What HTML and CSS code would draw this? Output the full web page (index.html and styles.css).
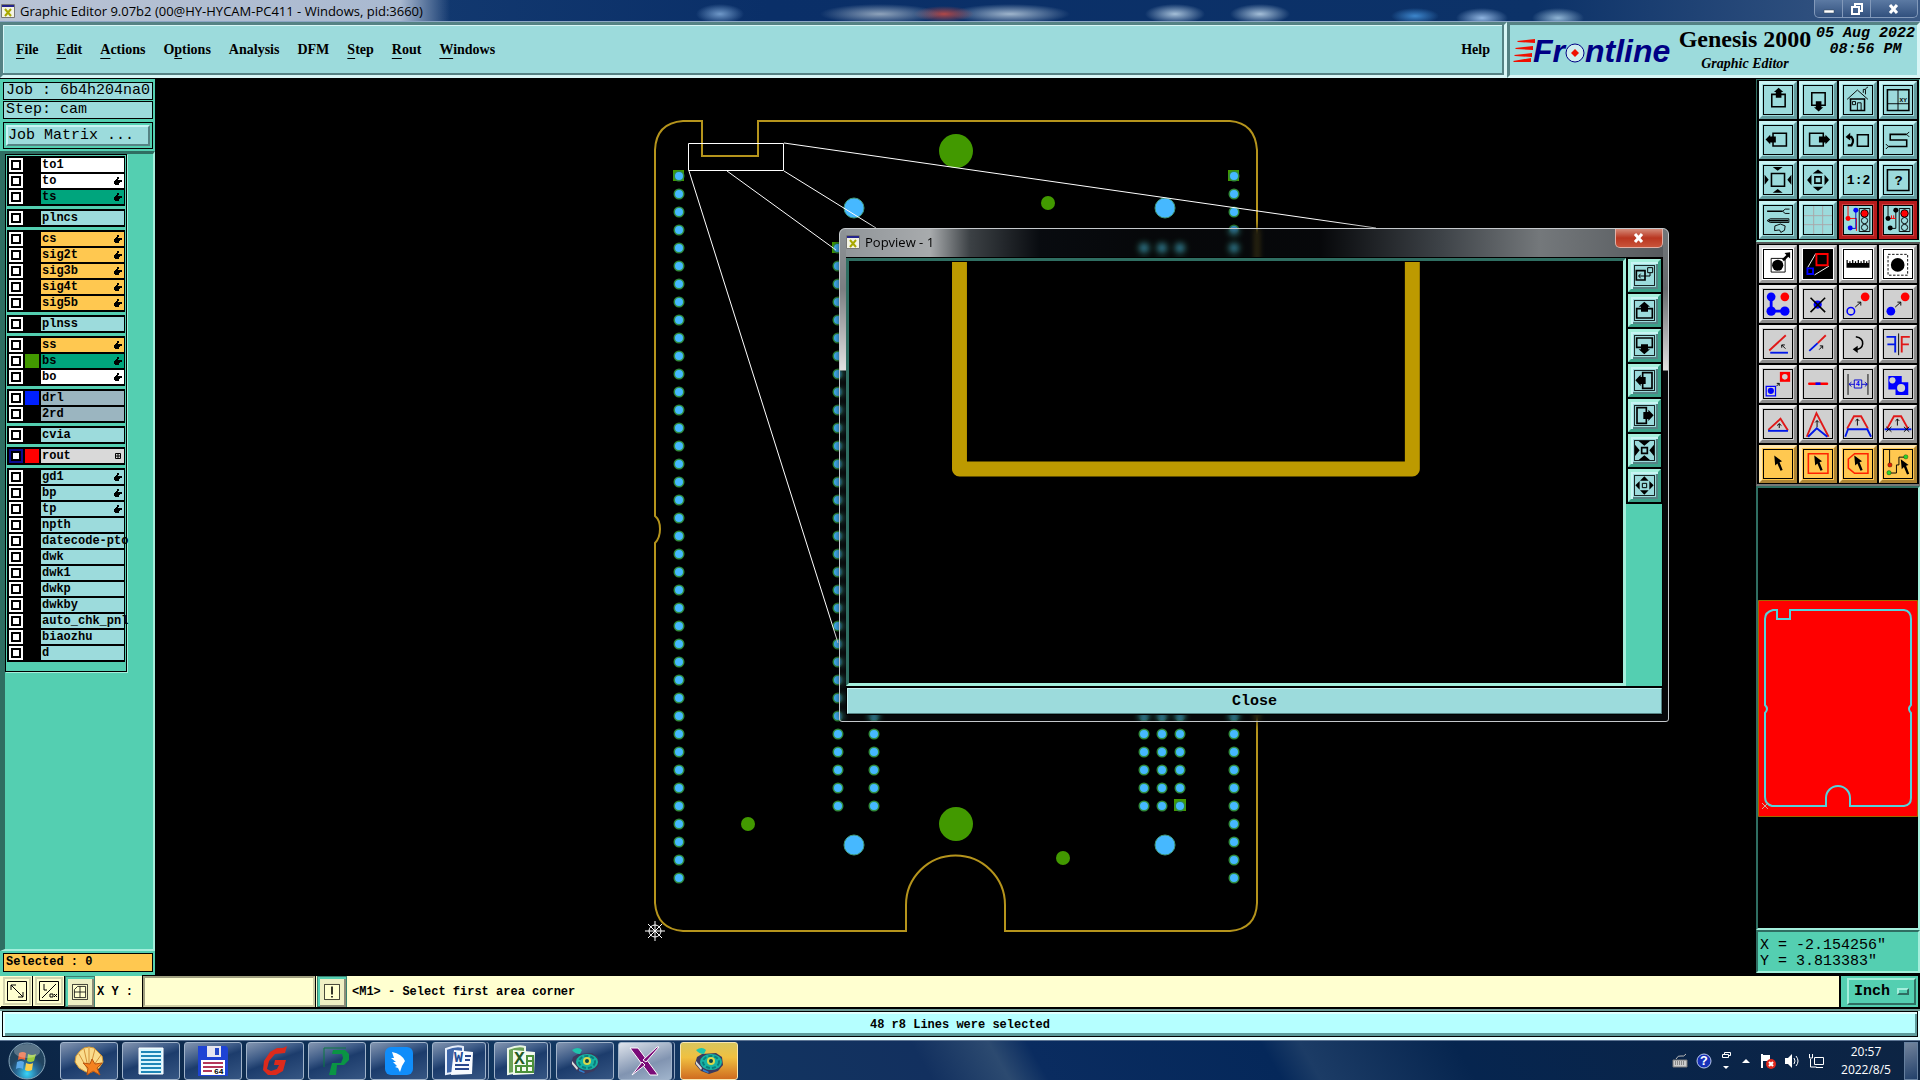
FILE: index.html
```html
<!DOCTYPE html>
<html lang="en">
<head>
<meta charset="utf-8">
<title>Graphic Editor</title>
<link rel="stylesheet" href="styles.css">
</head>
<body>
<svg class="defs" aria-hidden="true">
  <symbol id="hand" viewBox="0 0 8 8"><path d="M3 0h2v2h-1v1h4v2h-2v1h-1v2h-4v-1h-1v-3h1v-1h1v-1h1z"/></symbol>
  <symbol id="xlogo" viewBox="0 0 14 14"><path fill="#f4f4e4" stroke="#777" d="M.5 .5h13v13h-13z"/><path fill="#24248c" d="M1 1h12v2h-12z"/><path stroke="#a8a800" stroke-width="2" d="M4 5l6 7M10 5l-6 7"/></symbol>
  <symbol id="cursor" viewBox="0 0 90 90"><path d="M33 18L58 36L50 39L60 64L53 67L43 43L36 50Z"/></symbol>
  <symbol id="reel" viewBox="0 0 32 32"><path fill="#3c3a5e" d="M4 12l5-3 14-1 6 4 1 8-5 6-9 3-8-3-6-7z"/><ellipse cx="18" cy="17" rx="11" ry="8" fill="#17b3a3"/><ellipse cx="18" cy="17" rx="8" ry="6" fill="none" stroke="#0a7d7c" stroke-width="2" stroke-dasharray="4 2"/><circle cx="18" cy="16" r="4" fill="#d8d84a"/><circle cx="18" cy="16" r="2" fill="#07464c"/><path fill="#1fc5ac" d="M3 5q6-4 10 0l-2 4q-5 0-8-4z"/><path fill="#ddd" d="M3 16l6 7-1 2-5-6z"/><path fill="#2f7fd0" d="M10 24l6 3-1 1-5-2z"/></symbol>
</svg>

<header class="titlebar">
  <svg class="app-icon"><use href="#xlogo"/></svg>
  <span class="caption">Graphic Editor 9.07b2 (00@HY-HYCAM-PC411 - Windows, pid:3660)</span>
  <div class="winctl">
    <button aria-label="Minimize"><svg width="12" height="12"><path fill="#fff" stroke="#345" stroke-width=".5" d="M1 7h10v3h-10z"/></svg></button>
    <button aria-label="Restore"><svg width="12" height="12"><path fill="none" stroke="#fff" stroke-width="2" d="M4 3V1h7v7H9M1 4h7v7h-7z"/></svg></button>
    <button class="wide" aria-label="Close"><svg width="12" height="12"><path stroke="#fff" stroke-width="3" d="M2 2l7 8M9 2l-7 8"/></svg></button>
  </div>
</header>

<div class="head">
  <nav class="menu">
    <button><u>F</u>ile</button><button><u>E</u>dit</button><button><u>A</u>ctions</button><button>O<u>p</u>tions</button><button>Analysis</button><button>DFM</button><button><u>S</u>tep</button><button><u>R</u>out</button><button><u>W</u>indows</button><button class="help">Help</button>
  </nav>
  <div class="brand">
    <svg class="logo" width="162" height="44" viewBox="0 0 162 44">
      <path fill="#f00f00" d="M5 12L23 10v4L6 13zM3 19L21 17v4L4 20zM2 26L20 24v4L3 27zM1 32L19 29v4L2 33z"/>
      <text class="logotype" x="21" y="33">Fr</text><text class="logotype" x="73" y="33">ntline</text>
      <circle cx="63" cy="24" r="9" fill="#cfeeee" stroke="#000084" stroke-width="1"/><path fill="#f00f00" d="M63 20l4 4-4 4-4-4z"/>
    </svg>
    <div class="product"><strong>Genesis 2000</strong><em>Graphic Editor</em></div>
    <div class="stamp">05 Aug 2022<br>08:56 PM</div>
  </div>
</div>

<main class="work">
  <aside class="left">
    <div class="job">Job : 6b4h204na0</div>
    <div class="job">Step: cam</div>
    <div class="matrix"><button>Job Matrix ...</button></div>
    <div class="tray">
      <div class="layers">
        <div class="group">
          <label class="row white"><input type="checkbox"><i></i><span>to1</span></label>
          <label class="row white"><input type="checkbox"><i></i><span>to</span><svg><use href="#hand"/></svg></label>
          <label class="row green"><input type="checkbox"><i></i><span>ts</span><svg><use href="#hand"/></svg></label>
        </div>
        <div class="group"><label class="row"><input type="checkbox"><i></i><span>plncs</span></label></div>
        <div class="group">
          <label class="row amber"><input type="checkbox"><i></i><span>cs</span><svg><use href="#hand"/></svg></label>
          <label class="row amber"><input type="checkbox"><i></i><span>sig2t</span><svg><use href="#hand"/></svg></label>
          <label class="row amber"><input type="checkbox"><i></i><span>sig3b</span><svg><use href="#hand"/></svg></label>
          <label class="row amber"><input type="checkbox"><i></i><span>sig4t</span><svg><use href="#hand"/></svg></label>
          <label class="row amber"><input type="checkbox"><i></i><span>sig5b</span><svg><use href="#hand"/></svg></label>
        </div>
        <div class="group"><label class="row"><input type="checkbox"><i></i><span>plnss</span></label></div>
        <div class="group">
          <label class="row amber"><input type="checkbox"><i></i><span>ss</span><svg><use href="#hand"/></svg></label>
          <label class="row green"><input type="checkbox"><i class="sw-green"></i><span>bs</span><svg><use href="#hand"/></svg></label>
          <label class="row white"><input type="checkbox"><i></i><span>bo</span><svg><use href="#hand"/></svg></label>
        </div>
        <div class="group">
          <label class="row slate"><input type="checkbox"><i class="sw-blue"></i><span>drl</span></label>
          <label class="row slate"><input type="checkbox"><i></i><span>2rd</span></label>
        </div>
        <div class="group"><label class="row"><input type="checkbox"><i></i><span>cvia</span></label></div>
        <div class="group"><label class="row grey"><input type="checkbox" checked><i class="sw-red"></i><span>rout</span><svg viewBox="0 0 7 8"><path fill="none" stroke="#000" d="M1 1.500h5v5h-5zM3.500 1v6M1 4h5"/></svg></label></div>
        <div class="group">
          <label class="row"><input type="checkbox"><i></i><span>gd1</span><svg><use href="#hand"/></svg></label>
          <label class="row"><input type="checkbox"><i></i><span>bp</span><svg><use href="#hand"/></svg></label>
          <label class="row"><input type="checkbox"><i></i><span>tp</span><svg><use href="#hand"/></svg></label>
          <label class="row"><input type="checkbox"><i></i><span>npth</span></label>
          <label class="row"><input type="checkbox"><i></i><span>datecode-pto</span></label>
          <label class="row"><input type="checkbox"><i></i><span>dwk</span></label>
          <label class="row"><input type="checkbox"><i></i><span>dwk1</span></label>
          <label class="row"><input type="checkbox"><i></i><span>dwkp</span></label>
          <label class="row"><input type="checkbox"><i></i><span>dwkby</span></label>
          <label class="row"><input type="checkbox"><i></i><span>auto_chk_pnl</span></label>
          <label class="row"><input type="checkbox"><i></i><span>biaozhu</span></label>
          <label class="row"><input type="checkbox"><i></i><span>d</span></label>
        </div>
      </div>
    </div>
    <div class="selected">Selected : 0</div>
  </aside>

  <section class="canvas">
    <svg class="board" viewBox="155 79 1601 897">
      <g fill="none" stroke="#b5941c" stroke-width="2">
        <path d="M702 121H683Q656 123 655 150V516Q660 520 660 529Q660 538 655 543V903Q657 929 683 931H906V905A49 49 0 0 1 1005 905V931H1230Q1256 929 1257 903V150Q1255 123 1230 121H758V156H702Z"/>
      </g>
      <g fill="#429900">
        <circle cx="956" cy="151" r="17"/><circle cx="1048" cy="203" r="7"/><circle cx="956" cy="824" r="17"/><circle cx="748" cy="824" r="7"/><circle cx="1063" cy="858" r="7"/>
        <path d="M673 170h11v11h-11zM1228 170h11v11h-11zM832 242h11v11h-11zM1174 799h12v12h-12z"/>
      </g>
      <g fill="#46b8ff" stroke="#429978"><circle cx="854" cy="208" r="10"/><circle cx="1165" cy="208" r="10"/><circle cx="854" cy="845" r="10"/><circle cx="1165" cy="845" r="10"/></g>
      <g class="pads">
        <path class="rim" d="M679 176V879M1234 176V879M838 248V807M874 248V807M1144 248V807M1162 248V807M1180 248V807"/>
        <path class="core" d="M679 176V879M1234 176V879M838 248V807M874 248V807M1144 248V807M1162 248V807M1180 248V807"/>
      </g>
      <g class="hair"><path d="M688.500 143.500H783.500V170.500H688.500ZM784 143L1376 228M784 171L876 228M727 171L836 250M689 171L838 643"/></g>
      <g class="hair"><circle cx="655" cy="931" r="6"/><path d="M645 931h20M655 921v20M648 924l14 14M662 924l-14 14"/></g>
    </svg>

    <div class="popview">
      <div class="pop-title"><svg class="app-icon"><use href="#xlogo"/></svg><span class="caption">Popview - 1</span>
        <button class="pop-x" aria-label="Close window"><svg width="12" height="12"><path stroke="#fff" stroke-width="3" d="M2 2l7 8M9 2l-7 8"/></svg></button></div>
      <div class="pop-body">
        <div class="pop-view"><svg viewBox="0 0 775 424" preserveAspectRatio="xMinYMin meet"><path fill="none" stroke="#bd9a00" stroke-width="15" stroke-linejoin="round" d="M111 1V209H566V1"/></svg></div>
        <div class="pop-tools">
          <button aria-label="Pick area"><svg viewBox="0 0 63 63"><path class="k3" d="M1 1h61v61H1z"/><path class="k5" d="M7 17h26v28H7z"/><path class="k3" d="M41 8h15v15H41zM48 24v9H14M20 26l-6 7 6 7"/></svg></button>
          <button aria-label="Pan up"><svg viewBox="0 0 63 63"><path class="k3" d="M1 1h61v61H1z"/><path class="k5" d="M22 26H8V54H55V26H41"/><path d="M31 5L48 20H42V35H21V20H14Z"/></svg></button>
          <button aria-label="Pan down"><svg viewBox="0 0 63 63"><path class="k3" d="M1 1h61v61H1z"/><path class="k5" d="M22 37H8V9H55V37H41"/><path d="M31 58L48 43H42V28H21V43H14Z"/></svg></button>
          <button aria-label="Pan left"><svg viewBox="0 0 63 63"><path class="k3" d="M1 1h61v61H1z"/><path class="k5" d="M26 22V8H54V55H26V41"/><path d="M4 31L20 14V21H35V42H20V48Z"/></svg></button>
          <button aria-label="Pan right"><svg viewBox="0 0 63 63"><path class="k3" d="M1 1h61v61H1z"/><path class="k5" d="M37 22V8H9V55H37V41"/><path d="M59 31L43 14V21H28V42H43V48Z"/></svg></button>
          <button aria-label="Zoom out"><svg viewBox="0 0 63 63"><path class="k3" d="M1 1h61v61H1z"/><path class="k5" d="M23 23h17v17H23z"/><path d="M14 3H48L31 17ZM14 60H48L31 46ZM3 14V48L17 31ZM60 14V48L46 31Z"/></svg></button>
          <button aria-label="Zoom in"><svg viewBox="0 0 63 63"><path class="k3" d="M1 1h61v61H1z"/><path class="k3" d="M25 25h13v13H25z"/><path d="M18 17H44L31 4ZM18 46H44L31 59ZM17 18V44L4 31ZM46 18V44L59 31Z"/></svg></button>
          <div class="fill"></div>
        </div>
      </div>
      <button class="pop-close">Close</button>
    </div>
  </section>

  <aside class="right">
    <div class="tools cyan">
      <button aria-label="Pan up"><svg viewBox="0 0 90 90"><path class="k5" d="M25 27h43v40H25z"/><path d="M47 6L62 19H56V38H38V19H32Z"/></svg></button>
      <button aria-label="Pan down"><svg viewBox="0 0 90 90"><path class="k5" d="M25 22h43v40H25z"/><path d="M47 82L62 68H56V49H38V68H32Z"/></svg></button>
      <button aria-label="Home"><svg viewBox="0 0 90 90"><path class="k3" d="M10 43L43 13L77 43M27 50h10v10H27zM43 80V54H55V80M62 22V11h7v16M69 9l8-6"/><path class="k5" d="M21 42V79H66V42H18"/></svg></button>
      <button aria-label="Coordinates"><svg viewBox="0 0 90 90"><path class="k5" d="M11 12h69v67H11z"/><path class="k3" d="M45 12V79M11 57H80"/><text x="50" y="52" font-size="20">XY</text></svg></button>
      <button aria-label="Pan left"><svg viewBox="0 0 90 90"><path class="k5" d="M29 23h43v41H29z"/><path d="M5 43L20 28V34H38V53H20V59Z"/></svg></button>
      <button aria-label="Pan right"><svg viewBox="0 0 90 90"><path class="k5" d="M18 23h44v41H18z"/><path d="M84 43L69 28V34H48V53H69V59Z"/></svg></button>
      <button aria-label="Previous view"><svg viewBox="0 0 90 90"><path class="k5" d="M43 28h35v37H43z"/><path fill="none" stroke="#000" stroke-width="7" d="M14 35H24Q34 48 24 62H12"/><path d="M5 35L20 22V47Z"/></svg></button>
      <button aria-label="Serpentine"><svg viewBox="0 0 90 90"><path class="k5" d="M73 27H20V45H73V66H14"/><path class="k3" d="M73 27l8-8M73 27l8 8M14 66l-8-8M14 66l-8 8"/></svg></button>
      <button aria-label="Zoom out"><svg viewBox="0 0 90 90"><path class="k5" d="M24 24h42v41H24z"/><path d="M28 3H60L44 15ZM28 86H60L44 74ZM2 28V60L15 44ZM88 28V60L75 44Z"/></svg></button>
      <button aria-label="Zoom in"><svg viewBox="0 0 90 90"><path class="k5" d="M35 35h20v20H35z"/><path d="M28 24H62L45 11ZM28 67H62L45 80ZM24 28V62L10 45ZM66 28V62L80 45Z"/></svg></button>
      <button aria-label="Scale 1:2"><svg viewBox="0 0 90 90"><text x="9" y="59" font-size="42">1:2</text></svg></button>
      <button aria-label="Help"><svg viewBox="0 0 90 90"><path class="k5" d="M11 12h69v67H11z"/><text x="34" y="62" font-size="44">?</text></svg></button>
      <button aria-label="Setup"><svg viewBox="0 0 90 90"><path class="k5" d="M10 17H60M15 47H78"/><path class="k3" d="M60 17l8-7h14M60 17l8 7h14M10 47l10-6H80V53H20Z"/><path class="k3" d="M35 64l18-6 15 6-2 14-12 7-4-8-16 2z"/></svg></button>
      <button aria-label="Grid"><svg viewBox="0 0 90 90"><path fill="none" stroke="#a9a7a9" stroke-width="3" d="M31 0V90M60 0V90M0 31H90M0 60H90"/></svg></button>
      <button class="red" aria-label="Run check"><svg viewBox="0 0 90 90"><path class="r3" d="M13 0V40H40V80"/><path class="b3" d="M38 15V72H20"/><circle cx="38" cy="14" r="8" fill="#00f"/><circle cx="20" cy="71" r="8" fill="#00f"/><circle cx="13" cy="40" r="8" fill="#f00"/><path class="k3" d="M49 8h34v74H49z"/><circle cx="66" cy="24" r="12" fill="#f00" stroke="#000" stroke-width="3"/><circle class="k3" cx="66" cy="47" r="10"/><circle class="k3" cx="66" cy="69" r="10"/></svg></button>
      <button class="red" aria-label="Net check"><svg viewBox="0 0 90 90"><path class="k3" d="M13 0V40M38 15V72H20"/><path class="r3" d="M19 40H38M24 30V40M31 30V40"/><circle cx="38" cy="14" r="8"/><circle cx="20" cy="71" r="8"/><circle cx="13" cy="40" r="8"/><path class="k3" d="M49 8h34v74H49z"/><circle cx="66" cy="24" r="12" fill="#f00" stroke="#000" stroke-width="3"/><circle class="k3" cx="66" cy="47" r="10"/><circle class="k3" cx="66" cy="69" r="10"/></svg></button>
    </div>
    <div class="tools gray">
      <button class="white" aria-label="Pop view"><svg viewBox="0 0 90 90"><path class="k3" d="M23 27h45v44H23z"/><circle cx="44" cy="49" r="18"/><path d="M84 7V27L78 22L64 36L58 30L72 16L66 10Z"/></svg></button>
      <button class="white" aria-label="Area view"><svg viewBox="0 0 90 90"><path d="M0 0h90v90H0z"/><path fill="none" stroke="#fff" stroke-width="3" d="M38 11L12 56M80 52L34 80"/><path fill="none" stroke="#f00" stroke-width="6" d="M40 13h36v36H40z"/><path fill="none" stroke="#00f" stroke-width="6" d="M11 59h18v18H11z"/></svg></button>
      <button class="white" aria-label="Measure"><svg viewBox="0 0 90 90"><path d="M8 32h4v10h5V36h4v6h5V32h4v10h5V36h4v6h5V32h4v10h5V36h4v6h5V32h4v10h5V36h4v6h4V32h3V57H8Z"/></svg></button>
      <button class="white" aria-label="Select pad"><svg viewBox="0 0 90 90"><circle cx="44" cy="48" r="22"/><path class="k3" stroke-dasharray="8 5" d="M13 14h63v67H13z"/></svg></button>
      <button aria-label="Add"><svg viewBox="0 0 90 90"><path fill="none" stroke="#00f" stroke-width="9" d="M23 22V68H67"/><g fill="#00f"><circle cx="23" cy="22" r="14"/><circle cx="23" cy="68" r="15"/><circle cx="67" cy="68" r="15"/></g><circle cx="67" cy="22" r="14" fill="#f00"/></svg></button>
      <button aria-label="Delete"><svg viewBox="0 0 90 90"><circle cx="44" cy="47" r="13" fill="#00f"/><path class="k5" d="M21 25L68 71M68 25L21 71"/></svg></button>
      <button aria-label="Copy"><svg viewBox="0 0 90 90"><circle cx="22" cy="68" r="12" fill="none" stroke="#00f" stroke-width="5"/><circle cx="68" cy="22" r="14" fill="#f00"/><path class="k3" d="M36 55L54 39M43 39h11v11"/></svg></button>
      <button aria-label="Move"><svg viewBox="0 0 90 90"><circle cx="22" cy="68" r="14" fill="#00f"/><circle cx="68" cy="22" r="14" fill="#f00"/><path class="k3" d="M36 55L54 39M43 39h11v11"/></svg></button>
      <button aria-label="Rotate"><svg viewBox="0 0 90 90"><path class="r6" d="M17 66L70 17"/><path class="b6" d="M20 73H77"/><path class="k3" d="M69 60L57 48M57 57V48H67"/></svg></button>
      <button aria-label="Extend"><svg viewBox="0 0 90 90"><path class="b6" d="M17 67L44 42"/><path class="r6" d="M44 42L70 17"/><path class="k3" d="M49 63L60 51M51 51H60V60"/></svg></button>
      <button aria-label="Undo"><svg viewBox="0 0 90 90"><path class="k5" d="M38 22Q62 26 60 45Q58 62 36 63"/><path d="M28 62L44 51V74Z"/></svg></button>
      <button aria-label="Mirror"><svg viewBox="0 0 90 90"><path class="k3" d="M47 11V81"/><path class="b6" d="M8 22H36V72M11 46H36"/><path class="r6" d="M83 22H57V72M80 46H57"/></svg></button>
      <button aria-label="Change symbol"><svg viewBox="0 0 90 90"><path fill="none" stroke="#00f" stroke-width="4" d="M7 53h30v30H7z"/><circle cx="22" cy="67" r="10" fill="#00f"/><path fill="#f00" d="M51 6h33v32H51z"/><circle cx="67" cy="22" r="9" fill="#d0d0d0"/><path class="k3" d="M40 52L49 43M41 43H49V51"/></svg></button>
      <button aria-label="Break"><svg viewBox="0 0 90 90"><path stroke="#f00" stroke-width="8" stroke-linecap="round" d="M17 44H74"/><path stroke="#00f" stroke-width="8" d="M37 44H53"/></svg></button>
      <button aria-label="Resize"><svg viewBox="0 0 90 90"><path class="k3" d="M13 13V80M77 13V80"/><path class="b3" d="M33 32H57V58H33ZM33 46H17M24 39l-8 7 8 7M57 46H74M67 39l8 7-8 7"/><text x="38" y="53" font-size="22" fill="#00f">4</text></svg></button>
      <button aria-label="Polarity"><svg viewBox="0 0 90 90"><path fill="#00f" d="M14 19H57V39H78V80H37V63H14Z"/><circle cx="27" cy="33" r="10" fill="#d0d0d0"/><circle cx="55" cy="58" r="13" fill="#d0d0d0"/></svg></button>
      <button aria-label="Move triangle"><svg viewBox="0 0 90 90"><path class="r6" d="M14 64L53 28L77 66"/><path class="b6" d="M13 67H77"/><path class="k3" d="M49 58V44M42 50l7-6 7 6"/></svg></button>
      <button aria-label="Stretch peak"><svg viewBox="0 0 90 90"><path class="r6" d="M9 86L40 10L79 86"/><path class="b6" d="M13 86L41 59L75 86"/><path class="k3" d="M42 55V34M36 40l6-6 6 6"/></svg></button>
      <button aria-label="Stretch trapezoid"><svg viewBox="0 0 90 90"><path class="r6" d="M10 60L32 20H55L77 60"/><path class="b6" d="M4 86L13 62H75L87 86"/><path class="k3" d="M43 50V29M37 35l6-6 6 6"/></svg></button>
      <button aria-label="Stretch clipped"><svg viewBox="0 0 90 90"><path class="r6" d="M10 60L32 20H55L77 60"/><path class="b6" d="M2 62H88"/><path class="k3" d="M43 50V29M37 35l6-6 6 6M7 54l17 16M24 54L7 70M64 54l17 16M81 54L64 70"/></svg></button>
      <button class="amber" aria-label="Select"><svg viewBox="0 0 90 90"><use href="#cursor"/></svg></button>
      <button class="amber" aria-label="Select in frame"><svg viewBox="0 0 90 90"><path class="r5" d="M14 12h63v63H14z"/><use href="#cursor"/></svg></button>
      <button class="amber" aria-label="Select in polygon"><svg viewBox="0 0 90 90"><path class="r5" d="M34 12H77V75H34L14 58V29Z"/><use href="#cursor"/></svg></button>
      <button class="amber" aria-label="Select net"><svg viewBox="0 0 90 90"><path class="k3" d="M18 0V45M18 74H40V48H48V23H70"/><circle cx="70" cy="22" r="7" fill="#2bd52b" stroke="#000"/><circle cx="16" cy="73" r="7" fill="#2bd52b" stroke="#000"/><circle cx="19" cy="48" r="7" fill="#e02000" stroke="#000"/><use href="#cursor" x="21" y="12"/></svg></button>
    </div>
    <div class="overview">
      <svg viewBox="0 0 160 217"><path fill="#f00" stroke="#a06a00" d="M.5 .5h159v216H.5z"/><path fill="none" stroke="#52d4dc" stroke-width="2" d="M19 10H15Q7 12 7 19V105Q9 107 9 109Q9 111 7 113V197Q7 204 14 206H68V198A12 12 0 0 1 92 198V206H146Q153 205 153 198V113Q151 111 151 109Q151 107 153 105V19Q153 11 146 10H32V19H19Z"/><path stroke="#c8b0a0" d="M4 203l6 6M10 203l-6 6"/></svg>
    </div>
    <div class="coords">X = -2.154256"<br>Y = 3.813383"</div>
  </aside>
</main>

<form class="prompt">
  <button type="button" class="pbtn" aria-label="Snap"><svg viewBox="0 0 20 20"><path class="k1" d="M.5 .5h19v19H.5zM4 4l12 12M4 9V4h5M16 11v5h-5"/></svg></button>
  <button type="button" class="pbtn" aria-label="Angle"><svg viewBox="0 0 20 20"><path class="k1" d="M.5 .5h19v19H.5zM3 17L17 3M5 3v6h3M11 13h3v3h-3zM15 13l3 3M18 13l-3 3"/></svg></button>
  <button type="button" class="pbtn raised" aria-label="Grid snap"><svg viewBox="0 0 20 20"><path class="k1" d="M.5 .5h19v19H.5zM7 3h10v14H3V7zM10 3v14M3 10h14"/></svg></button>
  <label for="xy">X Y :</label>
  <input id="xy" type="text">
  <button type="button" class="pbtn raised" aria-label="Execute"><svg viewBox="0 0 20 20"><path class="k1" d="M.5 .5h19v19H.5z"/><path d="M9 3h2v10H9zM9 15h2v2H9z"/></svg></button>
  <output>&lt;M1&gt; - Select first area corner</output>
  <div class="unit"><button type="button">Inch<i></i></button></div>
</form>

<div class="status"><p>48 r8 Lines were selected</p></div>

<footer class="taskbar">
  <button class="orb" aria-label="Start"><svg viewBox="0 0 38 38"><defs><radialGradient id="o" cy=".85"><stop offset="0" stop-color="#38d5fa"/><stop offset=".6" stop-color="#286a96"/><stop offset="1" stop-color="#22445f"/></radialGradient></defs><circle cx="19" cy="19" r="18" fill="url(#o)" stroke="#88a6ba"/><path fill="#e9653a" d="M11 11q4-2 7 0l-1 7q-4-2-7 0z"/><path fill="#9acb3d" d="M20 12q4 2 8 0l-2 7q-4 2-7 0z"/><path fill="#5aa9e8" d="M9 20q4-2 7 0l-1 7q-4-2-7 0z"/><path fill="#fbd04a" d="M18 21q4 2 7 0l-1 7q-4 2-7 0z"/><ellipse cx="19" cy="9" rx="13" ry="7" fill="#fff" opacity=".25"/></svg></button>
  <button class="task" aria-label="Shell"><svg viewBox="0 0 32 32"><path fill="#fadc8c" stroke="#d79a35" d="M16 2l5 1 4 4 4 4 1 6-4 6-7 4h-6l-7-4-4-6 1-6 4-5 4-3z"/><path stroke="#d2923a" d="M16 27L6 9M16 27L11 4M16 27V3M16 27L22 4M16 27L28 10"/><path fill="#f58220" stroke="#b95510" d="M19 14l3 5 7-1-5 5 3 7-7-4-6 4 1-7-5-5 7 1z"/></svg></button>
  <button class="task" aria-label="Notes"><svg viewBox="0 0 32 32"><path fill="#d9f6ff" stroke="#fff" d="M4 3h24v26H4z"/><path stroke="#1f86b7" stroke-width="2" d="M6 7h20M6 11h20M6 15h20M6 19h20M6 23h20M6 27h20"/></svg></button>
  <button class="task" aria-label="Disk"><svg viewBox="0 0 32 32"><path fill="#1e43d4" d="M1 1h28l2 2v28H1z"/><path fill="#e5e5ef" d="M10 1h14v11H10z"/><path fill="#2348c8" d="M18 3h4v7h-4z"/><path fill="#fff" d="M4 15h24v15H4z"/><path stroke="#b4375a" stroke-width="2" d="M6 18h20M6 22h20M6 26h9"/><text x="17" y="29" font-size="8">64</text></svg></button>
  <button class="task" aria-label="Genesis"><svg viewBox="0 0 32 32"><path fill="#dc2a1c" d="M28 1l-2 7-10 1-6 7-2 8 4 2 6-2 2-4h-5l1-5h11l-3 11-7 4H9l-5-5 1-9 6-9 7-4 6 0z"/></svg></button>
  <button class="task" aria-label="Planner"><svg viewBox="0 0 32 32"><path fill="#0a9444" d="M12 5h12l4 4v6l-5 5h-7l-1 10H8l3-12h9l2-5-1-4H11z"/><path fill="none" stroke="#0a7a40" d="M3 22V3h22"/></svg></button>
  <button class="task" aria-label="Messenger"><svg viewBox="0 0 32 32"><rect x="2" y="2" width="28" height="28" rx="6" fill="#108dfa"/><path fill="#fff" d="M9 7q10 2 13 9l-3 5-2 6-2-4-3-1 2-1-4-4 3 0-5-4 3 0z"/></svg></button>
  <button class="task stack" aria-label="Word"><svg viewBox="0 0 32 32"><path fill="#3e66a9" stroke="#e6eefa" stroke-width="2" d="M3 4q10-4 17-2v24L3 29z"/><path fill="#f7fafe" d="M11 5l19 2-1 22-21 1z"/><path stroke="#29478d" stroke-width="2" d="M22 11h6M22 15h5M12 20h14M12 24h14"/><text x="11" y="17" font-size="15" fill="#244c94">W</text></svg></button>
  <button class="task stack" aria-label="Excel"><svg viewBox="0 0 32 32"><path fill="#6aa257" stroke="#eaf6e6" stroke-width="2" d="M3 4q10-4 17-2v24L3 29z"/><path fill="#f3faee" d="M8 5l22 2-1 22-21 1z"/><path fill="none" stroke="#4c913a" stroke-width="2" d="M21 11h7v16H11v-6h17M16 20v7M22 11v16M21 16h7"/><text x="9" y="19" font-size="18" fill="#235b22">X</text></svg></button>
  <button class="task" aria-label="Reel"><svg><use href="#reel"/></svg></button>
  <button class="task stack lit" aria-label="X server"><svg viewBox="0 0 32 32"><path fill="#7a0b78" stroke="#fff" d="M1 3h8l20 27h-8z"/><path fill="#7a0b78" stroke="#fff" d="M28 2h2L17 17l-3-2zM13 17l3 3L3 30z"/></svg></button>
  <button class="task hot" aria-label="Graphic Editor"><svg><use href="#reel"/></svg></button>
  <div class="systray">
    <svg width="16" height="16"><path fill="#ccc" stroke="#777" d="M1 7h14v7H1z"/><path stroke="#444" stroke-dasharray="1 1" d="M3 9h10M3 11h10"/><path fill="none" stroke="#bbb" d="M4 6q2-4 5-3t5-2"/></svg>
    <svg width="16" height="16"><circle cx="8" cy="8" r="7" fill="#1731b8" stroke="#b9c8ea"/><text x="4" y="12" font-size="13" fill="#fff">?</text></svg>
    <svg width="12" height="20"><path fill="none" stroke="#fff" d="M4.500 3.500V1.500h6v3h-2M2.500 3.500h6v3h-6z"/><path fill="#fff" d="M3 15h6l-3 3z"/></svg>
    <svg width="12" height="12"><path fill="#fff" d="M2 8h8L6 4z"/></svg>
    <svg width="16" height="16"><path stroke="#fff" stroke-width="2" d="M2 1v14"/><path fill="#fff" d="M3 2h7v6H3z"/><circle cx="11" cy="11" r="5" fill="#e0281c"/><path stroke="#fff" stroke-width="2" d="M9 9l4 4M13 9l-4 4"/></svg>
    <svg width="16" height="16"><path fill="#fff" d="M1 5h3l4-4v14l-4-4H1z"/><path fill="none" stroke="#fff" d="M10 5q2 3 0 6M12 3q4 5 0 10"/></svg>
    <svg width="16" height="16"><path fill="none" stroke="#fff" stroke-width="1" d="M6.500 4.500h9v7h-9zM2.500 6v8h6M8 14.500h7M1.500 1v4h3V1"/></svg>
    <time>20:57<br>2022/8/5</time>
  </div>
  <button class="peek" aria-label="Show desktop"></button>
</footer>
</body>
</html>
```

FILE: styles.css
```css
:root {
  --teal: #54cfb1;
  --teal-hi: #a4efdc;
  --teal-lo: #2f6e62;
  --cyan: #9cdbdc;
  --cyan-hi: #c8f4f4;
  --cyan-lo: #558284;
  --mono: "Liberation Mono", "Courier New", monospace;
  --serif: "Liberation Serif", "Times New Roman", serif;
  --ui: "Open Sans", "Noto Sans", sans-serif;
}
* { box-sizing: border-box; }
body {
  margin: 0;
  min-height: 100vh;
  display: flex;
  flex-direction: column;
  background: #000;
  color: #000;
  font-family: var(--mono);
}
button { font: inherit; color: inherit; margin: 0; padding: 0; border: 0; background: none; border-radius: 0; }
svg { display: block; flex: none; }
.defs { width: 0; height: 0; position: absolute; }
svg text { font-family: var(--mono); font-weight: bold; }
.k1, .k3, .k5, .r3, .b3, .r5, .r6, .b6 { fill: none; stroke: #000; stroke-width: 1; }
.k3 { stroke-width: 3; }
.k5 { stroke-width: 5; }
.r3 { stroke: #f00; stroke-width: 3; }
.r5 { stroke: #f20; stroke-width: 5; }
.r6 { stroke: #e01818; stroke-width: 6; }
.b3 { stroke: #00c; stroke-width: 3; }
.b6 { stroke: #0018e8; stroke-width: 6; }

/* window title */
.titlebar {
  height: 22px;
  display: flex;
  align-items: center;
  gap: 5px;
  padding-left: 1px;
  border-bottom: 1px solid #8ba6c4;
  background:
    linear-gradient(90deg, #b9c3d4 0, #a9b9d0 400px, transparent 450px),
    radial-gradient(24px 10px at 720px 14px, #6f98c8, transparent),
    radial-gradient(60px 10px at 880px 14px, #8fa3bb, transparent),
    radial-gradient(30px 8px at 944px 14px, #b04848, transparent),
    radial-gradient(60px 10px at 1010px 14px, #9fb5cc, transparent),
    radial-gradient(30px 10px at 1175px 14px, #a5bfd8, transparent),
    radial-gradient(30px 10px at 1260px 14px, #a5bfd8, transparent),
    radial-gradient(24px 8px at 1415px 16px, #3d86cc, transparent),
    radial-gradient(26px 10px at 1482px 18px, #8fb4e0, transparent),
    radial-gradient(26px 10px at 1558px 18px, #8fb4d4, transparent),
    linear-gradient(90deg, #1c4478, #0a2f68 40%, #0c3268 80%, #3b5a86);
}
.app-icon { width: 14px; height: 14px; }
.caption { font: 13px/18px var(--ui); }
.winctl { margin-left: auto; margin-right: 2px; align-self: flex-start; display: flex; height: 18px; border: 1px solid #8299ba; border-top: 0; border-radius: 0 0 5px 5px; background: linear-gradient(#5c7aa3, #31507e); }
.winctl button { width: 28px; display: grid; place-items: center; border-right: 1px solid #8299ba; }
.winctl .wide { width: 46px; border: 0; }

/* menu and brand */
.head { display: flex; height: 56px; }
.menu, .brand { border: 3px solid; border-color: var(--cyan-lo) #d8f6f6 #d8f6f6 var(--cyan-lo); background: var(--cyan); display: flex; }
.menu { flex: 1; align-items: center; gap: 18px; padding: 0 14px 0 13px; font: bold 14px/20px var(--serif); box-shadow: inset -2px -2px var(--cyan-lo), inset 1px 1px #d8f6f6; }
.menu u { text-underline-offset: 4px; }
.help { margin-left: auto; }
.brand { width: 413px; padding: 0 2px; }
.logo { margin-top: 4px; }
.logotype { font: italic bold 32px "Liberation Sans", Arial, sans-serif; fill: #000084; }
.product { width: 142px; display: flex; flex-direction: column; align-items: center; font-family: var(--serif); }
.product strong { font-size: 24px; line-height: 28px; }
.product em { font-size: 14px; line-height: 22px; font-weight: bold; }
.stamp { flex: 1; font: italic bold 15px/16px var(--mono); text-align: center; white-space: nowrap; padding-top: 1px; }

.work { flex: 1; display: flex; border-top: 1px solid #000; }

/* layer list */
.left { width: 155px; background: var(--teal); display: flex; flex-direction: column; padding: 3px 2px 4px 3px; }
.job { height: 18px; margin-bottom: 1px; border: 1px solid #000; background: var(--cyan); padding-left: 2px; font-size: 15px; line-height: 16px; white-space: pre; overflow: hidden; }
.matrix { border: 1px solid #000; height: 27px; margin-top: 2px; padding: 2px; }
.matrix button { width: 100%; height: 21px; border: 2px solid; border-color: var(--cyan-hi) var(--cyan-lo) var(--cyan-lo) var(--cyan-hi); background: var(--cyan); font-size: 15px; line-height: 17px; text-align: left; }
.tray { flex: 1; margin: 2px -2px 2px -3px; border: solid; border-width: 3px 2px 2px 5px; border-color: var(--teal-lo) var(--teal-hi) var(--teal-hi) var(--teal-lo); }
.layers { width: 122px; border: 1px solid #000; box-shadow: 1px 1px var(--teal-hi); padding: 1px 1px 9px; display: grid; gap: 3px; }
.group { background: #000; width: 118px; padding: 1px 1px 1px 2px; font-size: 12px; font-weight: bold; }
.row { display: flex; height: 16px; padding: 1px 0; align-items: stretch; gap: 2px; --row: var(--cyan); position: relative; }
.row input { appearance: none; margin: 0; width: 14px; height: 14px; border: 2px solid #fff; background: linear-gradient(#fff, #fff) center / 6px 6px no-repeat #000; }
.row input:checked { border-color: #0c0c90; }
.row i { width: 14px; }
.row span { flex: 1; min-width: 0; background: var(--row); padding-left: 1px; line-height: 14px; white-space: nowrap; }
.row svg { position: absolute; right: 2px; top: 4px; width: 8px; height: 8px; }
.row.white { --row: #fff; }
.row.green { --row: #00a57d; }
.row.amber { --row: #ffc850; }
.row.slate { --row: #9bb5c0; }
.row.grey { --row: #d9d9d9; }
.sw-green { background: #429900; }
.sw-blue { background: #0020ff; }
.sw-red { background: #f00; }
.selected { border: 1px solid #000; background: #ffc850; height: 19px; padding-left: 2px; font-size: 12px; font-weight: bold; line-height: 17px; }

/* drawing area */
.canvas { flex: 1; min-width: 0; position: relative; background: #000; }
.board { width: 100%; height: 100%; }
.pads path { fill: none; stroke-linecap: round; stroke-dasharray: 0 18; }
.rim { stroke: #2f8b3c; stroke-width: 11; }
.core { stroke: #46b8ff; stroke-width: 8; }
.hair { fill: none; stroke: #fff; stroke-width: 1; }

.popview {
  position: absolute;
  left: 684px;
  top: 149px;
  width: 830px;
  display: flex;
  flex-direction: column;
  padding: 0 5px 6px 6px;
  border-radius: 6px 6px 3px 3px;
  border: 1px solid #c5c9cc;
  box-shadow: 0 0 8px rgba(0, 0, 0, .7);
  backdrop-filter: blur(3px);
  background:
    linear-gradient(#8f9498, #7b7f82 60px, #e2e2e2 141px, transparent 142px) left / 6px 100% no-repeat,
    linear-gradient(#70767a, #66696c 60px, #e2e2e2 141px, transparent 142px) right / 5px 100% no-repeat,
    linear-gradient(90deg, #8f9498 0, #a8abad 90px, #3c4145 130px, rgba(10, 14, 20, .6) 200px, rgba(10, 14, 20, .1) 300px, rgba(10, 14, 20, .1) 480px, #3d4247 600px, #74787b 700px, #55595d 100%) top / 100% 28px no-repeat,
    rgba(20, 24, 30, .3);
}
.pop-title { height: 28px; display: flex; align-items: center; gap: 5px; padding-bottom: 3px; }
.pop-x { margin-left: auto; align-self: flex-start; width: 48px; height: 19px; display: grid; place-items: center; border: 1px solid #e2b0a6; border-top: 0; border-radius: 0 0 5px 5px; background: linear-gradient(#d58a78, #b93620 50%, #c9543a); }
.pop-body { display: flex; height: 430px; border: solid #000; border-width: 1px 0; background: #000; }
.pop-view { flex: 1; border: 3px solid; border-color: var(--teal-lo) var(--teal-hi) var(--teal-hi) var(--teal-lo); }
.pop-view svg { width: 100%; height: 100%; }
.pop-tools { width: 37px; display: flex; flex-direction: column; gap: 2px; padding: 1px 2px 0; }
.pop-tools button { height: 33px; border: 3px solid; border-color: var(--teal-hi) #3aa188 #3aa188 var(--teal-hi); background: var(--cyan); box-shadow: inset 2px 2px var(--cyan-hi), inset -2px -2px var(--cyan-lo); display: grid; place-items: center; }
.pop-tools svg { width: 21px; height: 21px; }
.fill { flex: 1; background: var(--teal); margin: 0 -1px 0 -2px; }
.pop-close { height: 28px; background: var(--cyan); border: 2px solid; border-color: var(--cyan-hi) var(--cyan-lo) var(--cyan-lo) var(--cyan-hi); outline: 1px solid #000; outline-offset: -1px; font-size: 15px; font-weight: bold; line-height: 26px; }

/* tool palette */
.right { width: 164px; background: #000; display: flex; flex-direction: column; }
.tools { display: grid; grid-template-columns: repeat(4, 38px); gap: 2px; padding: 1px 2px; border: solid; border-width: 1px 1px 2px; border-color: var(--teal-lo) var(--teal-hi) var(--teal-hi) var(--teal-lo); }
.tools button { height: 38px; padding: 1px; background: var(--face); border: 3px solid; border-color: var(--hi) var(--lo) var(--lo) var(--hi); }
.tools svg { width: 30px; height: 30px; border: 1px solid #000; }
.cyan { --face: #9cdbdc; --hi: #c8f4f4; --lo: #639c9e; }
.gray { --face: #d0d0d0; --hi: #ededed; --lo: #8b8b8b; border-top-width: 2px; border-color: #555 #777 #777 #555; }
.tools .white { --face: #fff; --hi: #ddd; --lo: #999; }
.tools .amber { --face: #ffc850; --hi: #ffe7b0; --lo: #ad8435; }
.tools .red { border-color: #b51c1c; background: #c44; }
.red svg { background: #9cdbdc; }
.overview { flex: 1; display: flex; align-items: center; border: 2px solid; border-color: var(--teal-lo) var(--teal-hi) var(--teal-hi) var(--teal-lo); }
.overview svg { width: 100%; }
.coords { border: 2px solid; border-color: var(--teal-lo) var(--teal-hi) var(--teal-hi) var(--teal-lo); background: var(--teal); padding: 6px 2px 0; height: 43px; font-size: 15px; line-height: 16px; margin-bottom: 3px; }

/* prompt line */
.prompt { display: flex; height: 31px; background: #ffffd0; font-size: 12px; font-weight: bold; align-items: stretch; padding-left: 1px; }
.pbtn { width: 32px; display: grid; place-items: center; border: solid #000; border-width: 0 1px 1px 0; background: #ffffd0; }
.pbtn svg { width: 20px; height: 20px; box-shadow: 0 0 0 2px #ffffd0, 0 0 0 4px #d4d4ae; }
.pbtn.raised { width: 30px; border: 0; background: var(--teal); box-shadow: inset 0 0 0 1px #3a8070; }
.pbtn.raised svg { width: 16px; height: 18px; background: #ffffd0; box-shadow: 0 0 0 4px #efefc4, 1px 1px 0 5px #8c8c78; }
.prompt label { width: 48px; padding-left: 2px; line-height: 32px; white-space: nowrap; }
.prompt input { width: 172px; margin-right: 2px; border: 2px solid; border-color: #a09f80 #cfcfa6 #cfcfa6 #a09f80; outline: 1px solid #000; background: #ffffd0; font: inherit; border-radius: 0; }
.prompt output { flex: 1; padding-left: 5px; line-height: 32px; white-space: nowrap; }
.unit { width: 81px; border: solid #000; border-width: 0 2px; background: var(--teal); padding: 2px 2px 2px 6px; }
.unit button { width: 100%; height: 27px; display: flex; align-items: center; justify-content: space-between; padding: 0 5px; border: 2px solid; border-color: var(--teal-hi) var(--teal-lo) var(--teal-lo) var(--teal-hi); font-size: 15px; }
.unit i { width: 12px; height: 7px; border: 2px solid; border-color: var(--teal-hi) var(--teal-lo) var(--teal-lo) var(--teal-hi); }

.status { margin-top: 2px; height: 31px; padding: 2px 2px 4px; background: linear-gradient(#6f9c96 2px, #e4ffff 2px); }
.status p { margin: 0; height: 26px; border: 1px solid #000; box-shadow: inset 2px 2px #e0ffff, inset -2px -3px #5d9b9b; background: #b5ffff; text-align: center; font-size: 12px; font-weight: bold; line-height: 26px; }

/* desktop taskbar */
.taskbar { height: 40px; display: flex; align-items: center; gap: 4px; padding-right: 2px; border-top: 1px solid #5d7594; background: linear-gradient(60deg, #0b2444 0, #123862 30%, #12305f 48%, #2c4a70 52%, #0a2c60 54%, #05285a 66%, #1c3c66 68%, #06254f 76%, #0d2443 100%); }
.orb { width: 56px; height: 38px; display: grid; place-items: center; padding-right: 2px; }
.orb svg { width: 38px; height: 38px; }
.task { width: 58px; height: 38px; display: grid; place-items: center; border: 1px solid #a0b3ca; border-radius: 3px; background: linear-gradient(160deg, #8395b0 0, #3c5a86 35%, #1c3c6c 50%, #365683 100%); }
.task svg { width: 32px; height: 32px; }
.stack { width: 54px; margin-right: 4px; box-shadow: 2px 0 #18345e, 3px 0 #8ea3bf; }
.lit { background: linear-gradient(160deg, #dfe4ec, #8194b1 60%, #a0b4cc); }
.hot { background: linear-gradient(#d9c65c, #f0c040 40%, #d06c20); border-color: #f7e6b0; }
.systray { margin-left: auto; height: 100%; display: flex; align-items: center; gap: 8px; }
.systray time { width: 68px; text-align: center; font: 12px/18px var(--ui); color: #fff; }
.peek { width: 14px; height: 38px; border: 1px solid #66809f; background: linear-gradient(160deg, #73849d, #22406a); }
```
